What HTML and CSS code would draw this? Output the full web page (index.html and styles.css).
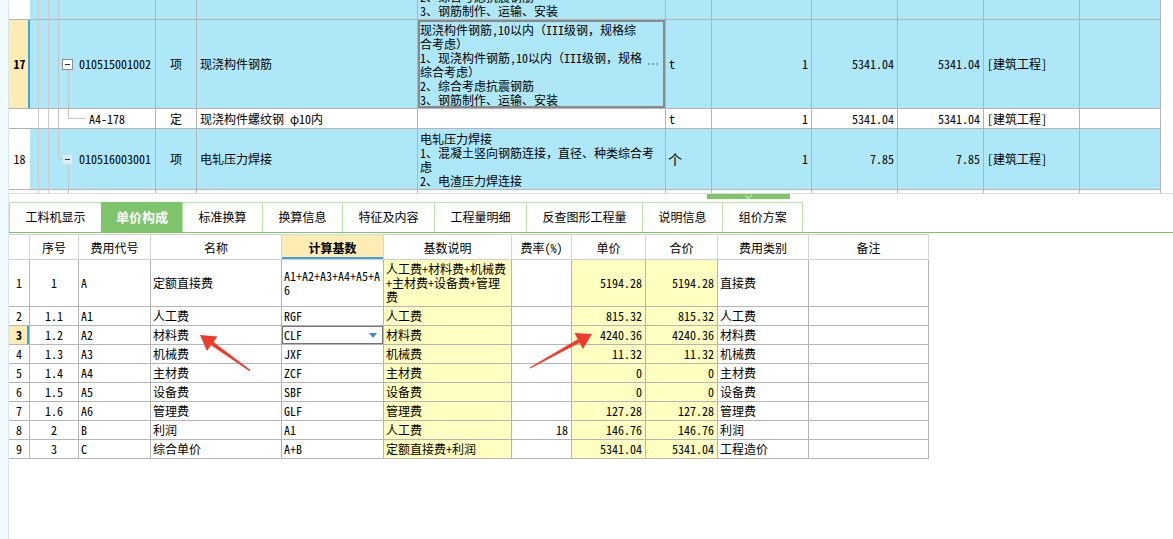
FILE: index.html
```html
<!DOCTYPE html>
<html lang="zh-CN">
<head>
    <meta charset="UTF-8">
    <title>单价构成</title>
    <link rel="stylesheet" href="styles.css">
</head>
<body>
<div class="app">
    <div class="side"></div>

    <div class="main">
        <!-- 清单/定额列表 -->
        <div class="grid-view">
            <table class="grid">
                <colgroup>
                    <col style="width:21px"><col style="width:9px"><col style="width:10px"><col style="width:10px">
                    <col style="width:97px"><col style="width:41px"><col style="width:221px"><col style="width:248px">
                    <col style="width:46px"><col style="width:100px"><col style="width:86px"><col style="width:86px">
                    <col style="width:96px"><col style="width:81px">
                </colgroup>
                <tr class="item big">
                    <td class="rn"></td><td class="ind"></td><td class="ind"></td><td class="ind3 line"></td>
                    <td class="code"></td>
                    <td></td>
                    <td></td>
                    <td class="desc">现浇构件钢筋,10以内（III级钢，规格综<br>合考虑）<br>1、现浇构件钢筋,10以内（III级钢，规格<br>综合考虑）<br>2、综合考虑抗震钢筋<br>3、钢筋制作、运输、安装</td>
                    <td></td><td></td><td></td><td></td><td></td><td></td>
                </tr>
                <tr class="item big">
                    <td class="rn cur">17</td><td class="ind"></td><td class="ind"></td><td class="ind3 line"></td>
                    <td class="code"><span class="fold"></span>010515001002<span class="down"></span></td>
                    <td class="c">项</td>
                    <td>现浇构件钢筋</td>
                    <td class="desc sel">现浇构件钢筋,10以内（III级钢，规格综<br>合考虑）<br>1、现浇构件钢筋,10以内（III级钢，规格<br>综合考虑）<br>2、综合考虑抗震钢筋<br>3、钢筋制作、运输、安装<span class="more"></span></td>
                    <td>t</td><td class="r">1</td><td class="r">5341.04</td><td class="r">5341.04</td><td>[建筑工程]</td><td></td>
                </tr>
                <tr class="sub">
                    <td class="rn"></td><td class="ind"></td><td class="ind"></td><td class="ind3 line"></td>
                    <td class="code leaf"><span class="elbow"></span>A4-178</td>
                    <td class="c">定</td>
                    <td>现浇构件螺纹钢 φ10内</td>
                    <td></td>
                    <td>t</td><td class="r">1</td><td class="r">5341.04</td><td class="r">5341.04</td><td>[建筑工程]</td><td></td>
                </tr>
                <tr class="item mid">
                    <td class="rn">18</td><td class="ind"></td><td class="ind"></td><td class="ind3 half"></td>
                    <td class="code"><span class="fold soft"></span>010516003001<span class="down"></span></td>
                    <td class="c">项</td>
                    <td>电轧压力焊接</td>
                    <td class="desc">电轧压力焊接<br>1、混凝土竖向钢筋连接，直径、种类综合考<br>虑<br>2、电渣压力焊连接</td>
                    <td class="unit">个</td><td class="r">1</td><td class="r">7.85</td><td class="r">7.85</td><td>[建筑工程]</td><td></td>
                </tr>
                <tr class="sub">
                    <td class="rn"></td><td class="ind"></td><td class="ind"></td><td class="ind3"></td>
                    <td class="code"><span class="pass"></span></td>
                    <td></td><td></td><td></td><td></td><td></td><td></td><td></td><td></td><td></td>
                </tr>
            </table>
        </div>

        <div class="splitter"><span class="grip"></span></div>

        <div class="tabs">
            <div class="tab">工料机显示</div>
            <div class="tab active">单价构成</div>
            <div class="tab">标准换算</div>
            <div class="tab">换算信息</div>
            <div class="tab">特征及内容</div>
            <div class="tab">工程量明细</div>
            <div class="tab">反查图形工程量</div>
            <div class="tab">说明信息</div>
            <div class="tab">组价方案</div>
        </div>

        <!-- 单价构成明细 -->
        <table class="detail">
            <colgroup>
                <col style="width:21px"><col style="width:49px"><col style="width:72px"><col style="width:131px">
                <col style="width:102px"><col style="width:128px"><col style="width:60px"><col style="width:74px">
                <col style="width:72px"><col style="width:91px"><col style="width:120px">
            </colgroup>
            <tr>
                <th></th><th>序号</th><th>费用代号</th><th>名称</th><th class="base">计算基数</th>
                <th>基数说明</th><th>费率(%)</th><th>单价</th><th>合价</th><th>费用类别</th><th>备注</th>
            </tr>
            <tr class="tall">
                <td class="c">1</td><td class="c">1</td><td>A</td><td>定额直接费</td>
                <td>A1+A2+A3+A4+A5+A<br>6</td>
                <td class="y">人工费+材料费+机械费<br>+主材费+设备费+管理<br>费</td>
                <td class="r"></td><td class="y r">5194.28</td><td class="y r">5194.28</td><td>直接费</td><td></td>
            </tr>
            <tr>
                <td class="c">2</td><td class="c">1.1</td><td>A1</td><td>人工费</td><td>RGF</td><td class="y">人工费</td>
                <td class="r"></td><td class="y r">815.32</td><td class="y r">815.32</td><td>人工费</td><td></td>
            </tr>
            <tr>
                <td class="c cur">3</td><td class="c">1.2</td><td>A2</td><td>材料费</td>
                <td class="edit">CLF<span class="drop"></span></td><td class="y">材料费</td>
                <td class="r"></td><td class="y r">4240.36</td><td class="y r">4240.36</td><td>材料费</td><td></td>
            </tr>
            <tr>
                <td class="c">4</td><td class="c">1.3</td><td>A3</td><td>机械费</td><td>JXF</td><td class="y">机械费</td>
                <td class="r"></td><td class="y r">11.32</td><td class="y r">11.32</td><td>机械费</td><td></td>
            </tr>
            <tr>
                <td class="c">5</td><td class="c">1.4</td><td>A4</td><td>主材费</td><td>ZCF</td><td class="y">主材费</td>
                <td class="r"></td><td class="y r">0</td><td class="y r">0</td><td>主材费</td><td></td>
            </tr>
            <tr>
                <td class="c">6</td><td class="c">1.5</td><td>A5</td><td>设备费</td><td>SBF</td><td class="y">设备费</td>
                <td class="r"></td><td class="y r">0</td><td class="y r">0</td><td>设备费</td><td></td>
            </tr>
            <tr>
                <td class="c">7</td><td class="c">1.6</td><td>A6</td><td>管理费</td><td>GLF</td><td class="y">管理费</td>
                <td class="r"></td><td class="y r">127.28</td><td class="y r">127.28</td><td>管理费</td><td></td>
            </tr>
            <tr>
                <td class="c">8</td><td class="c">2</td><td>B</td><td>利润</td><td>A1</td><td class="y">人工费</td>
                <td class="r">18</td><td class="y r">146.76</td><td class="y r">146.76</td><td>利润</td><td></td>
            </tr>
            <tr>
                <td class="c">9</td><td class="c">3</td><td>C</td><td>综合单价</td><td>A+B</td><td class="y">定额直接费+利润</td>
                <td class="r"></td><td class="y r">5341.04</td><td class="y r">5341.04</td><td>工程造价</td><td></td>
            </tr>
        </table>
    </div>

    <!-- 标注箭头 -->
    <svg class="marks" width="1173" height="539" viewBox="0 0 1173 539">
        <polygon points="200,335 217.4,336.4 213.4,342.1 250.4,370.1 249.6,371.3 211,345.3 207,351"/>
        <polygon points="592,334 582.9,349 579.6,342.8 530.3,368.6 529.7,367.4 577.8,339.2 574.5,333"/>
    </svg>
</div>
</body>
</html>
```

FILE: styles.css
```css
* {
    margin: 0;
    padding: 0;
    box-sizing: border-box;
}

body {
    font-family: "Noto Sans Mono CJK SC", "Noto Sans CJK SC", "Liberation Mono", monospace;
    font-size: 12px;
    color: #000;
    background: #fff;
    overflow: hidden;
}

.app {
    display: flex;
    height: 100vh;
    position: relative;
}

.side {
    width: 9px;
    flex-shrink: 0;
    background: #f1fbfe;
    border-right: 1px solid #d4e8ee;
}

.main {
    flex: 1;
    min-width: 0;
}

/* top grid */
.grid-view {
    height: 193px;
    overflow: hidden;
}

.grid {
    width: 1152px;
    table-layout: fixed;
    border-collapse: separate;
    border-spacing: 0;
    margin-top: -69px;
}

.grid td {
    border-right: 1px solid #b3b3b3;
    border-bottom: 1px solid #b3b3b3;
    padding: 0 3px;
    line-height: 14px;
    white-space: nowrap;
    overflow: hidden;
    vertical-align: middle;
    height: 20px;
}

.grid tr.big td {
    height: 89px;
}

.grid tr.mid td {
    height: 61px;
}

.grid tr.item td {
    background: #aee8f8;
}

.grid tr.sub td {
    background: #fff;
}

.grid td.rn {
    background: #fff !important;
    border-right: 0;
    padding: 0;
    text-align: center;
}

.grid td.rn.cur {
    background: #ffecb5 !important;
    font-weight: bold;
    box-shadow: inset -2px 0 0 #3ba6da;
}

.grid td.ind {
    border-right-color: #cbcbcb;
    padding: 0;
}

.grid td.ind3 {
    border-right: 0;
    padding: 0;
    position: relative;
}

.grid td.ind3.line {
    border-right: 1px solid #c4c4c4;
}

.grid td.ind3.half::after {
    content: "";
    position: absolute;
    right: 0;
    top: 0;
    height: 50%;
    border-right: 1px solid #c4c4c4;
}

.grid td.code {
    position: relative;
    padding-left: 3px;
}

.grid td.code.leaf {
    padding-left: 30px;
}

.fold {
    display: inline-block;
    width: 11px;
    height: 11px;
    border: 1px solid #8e8e8e;
    background: #fff;
    vertical-align: -1px;
    margin-right: 6px;
    position: relative;
}

.fold::before {
    content: "";
    position: absolute;
    left: 2px;
    top: 4px;
    width: 5px;
    height: 1px;
    background: #333;
}

.fold.soft {
    background: #d6eef5;
    border-color: #c2e0ea;
}

.fold.soft::after {
    content: "";
    position: absolute;
    left: -5px;
    top: 4px;
    width: 4px;
    border-top: 1px solid #c4c4c4;
}

.down,
.pass {
    position: absolute;
    left: 9px;
    top: calc(50% + 6px);
    bottom: 0;
    border-left: 1px solid #c4c4c4;
}

.pass {
    top: 0;
}

.elbow {
    position: absolute;
    left: 9px;
    top: 0;
    width: 18px;
    height: 10px;
    border-left: 1px solid #c4c4c4;
    border-bottom: 1px solid #c4c4c4;
}

.grid td.c {
    text-align: center;
}

.grid td.r {
    text-align: right;
}

.grid td.desc {
    vertical-align: top;
    padding: 3px 2px 0;
    position: relative;
}

.grid td.sel {
    box-shadow: inset 0 0 0 2px #8a8a8a;
}

.grid td.unit {
    font-size: 14px;
    padding-left: 2px;
}

.more {
    position: absolute;
    right: 7px;
    top: 43px;
    width: 10px;
    height: 2px;
    background: repeating-linear-gradient(to right, #72a8da 0 2px, transparent 2px 4px);
}

/* splitter + tabs */
.splitter {
    height: 9px;
    border-top: 1px solid #dcdcdc;
    padding-left: 698px;
}

.grip {
    display: block;
    width: 83px;
    height: 5px;
    background: #7fc46c;
    position: relative;
}

.grip::after {
    content: "";
    position: absolute;
    left: 39px;
    top: -1px;
    width: 4px;
    height: 4px;
    border-right: 1px solid #cdeebf;
    border-bottom: 1px solid #cdeebf;
    transform: rotate(45deg);
}

.tabs {
    display: flex;
    height: 31px;
    border-bottom: 1px solid #7cc46a;
}

.tab {
    height: 30px;
    line-height: 28px;
    padding: 0 15.5px;
    border: 1px solid #b9e3a6;
    border-bottom: 0;
    margin-left: -1px;
    white-space: nowrap;
}

.tab:first-child {
    margin-left: 0;
}

.tab.active {
    background: #7dc46b;
    border-color: #7dc46b;
    color: #fff;
    font-weight: bold;
    font-size: 13px;
    padding: 0 14px;
}

/* detail table */
.detail {
    width: 920px;
    table-layout: fixed;
    border-collapse: separate;
    border-spacing: 0;
    margin-top: 1px;
}

.detail th {
    height: 26px;
    font-weight: normal;
    border-top: 1px solid #d6d6d6;
    border-right: 1px solid #d6d6d6;
    border-bottom: 1px solid #cfcfcf;
    text-align: center;
    white-space: nowrap;
}

.detail th.base {
    background: #ffecb5;
    font-weight: bold;
    box-shadow: inset 0 -2px 0 #3fa3da;
}

.detail td {
    height: 19px;
    padding: 0 2px;
    line-height: 14px;
    border-right: 1px solid #b5b5b5;
    border-bottom: 1px solid #b5b5b5;
    white-space: nowrap;
    overflow: hidden;
    vertical-align: middle;
}

.detail tr.tall td {
    height: 47px;
}

.detail td.c {
    text-align: center;
}

.detail td.r {
    text-align: right;
    padding-right: 3px;
}

.detail td.y {
    background: #ffffc1;
}

.detail td.cur {
    background: #ffecb5;
    font-weight: bold;
    box-shadow: inset -2px 0 0 #3ba6da;
}

.detail td.edit {
    box-shadow: inset 0 0 0 1px #727272;
}

.drop {
    float: right;
    margin: 5px 4px 0 0;
    border-left: 4px solid transparent;
    border-right: 4px solid transparent;
    border-top: 5px solid #4189c9;
}

/* arrows */
.marks {
    position: absolute;
    left: 0;
    top: 0;
    pointer-events: none;
}

.marks polygon {
    fill: #ee3b2b;
}
```
